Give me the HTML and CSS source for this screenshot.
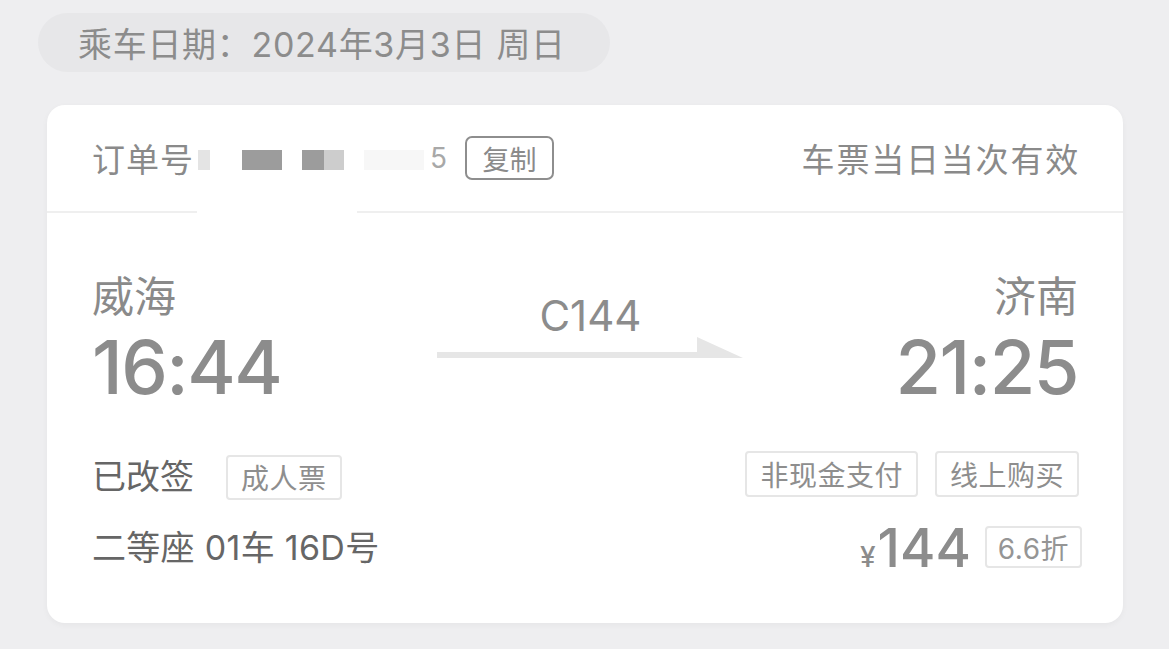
FILE: index.html
```html
<!DOCTYPE html>
<html lang="zh-CN">
<head>
<meta charset="utf-8">
<link rel="stylesheet" href="styles.css">
</head>
<body>
<div class="page">
  <div class="date-pill">乘车日期：2024年3月3日 周日</div>
  <div class="card">
    <div class="card-head">
      <div class="order">
        <span class="order-label">订单号</span>
        <span class="mask">
          <i class="m m1"></i><i class="m m2"></i><i class="m m3"></i><i class="m m4"></i><i class="m m5"></i>
        </span>
        <span class="order-tail">5</span>
        <span class="copy-btn">复制</span>
        <span class="blur-gap"></span>
      </div>
      <div class="valid">车票当日当次有效</div>
    </div>
    <div class="route">
      <div class="station">
        <div class="city">威海</div>
        <div class="time">16:44</div>
      </div>
      <div class="train">
        <div class="train-no">C144</div>
        <svg class="arrow" width="306" height="24" viewBox="0 0 306 24">
          <path d="M0 15 H260 V0 L306 21 H0 Z" fill="#e6e6e6"/>
        </svg>
      </div>
      <div class="station right">
        <div class="city">济南</div>
        <div class="time">21:25</div>
      </div>
    </div>
    <div class="info-row">
      <div class="left-group">
        <span class="status">已改签</span>
        <span class="tag tag-adult">成人票</span>
      </div>
      <div class="right-group">
        <span class="tag">非现金支付</span>
        <span class="tag">线上购买</span>
      </div>
    </div>
    <div class="info-row seat-row">
      <span class="seat">二等座 01车 16D号</span>
      <div class="price-group">
        <span class="price"><span class="yen">¥</span>144</span>
        <span class="tag discount">6.6折</span>
      </div>
    </div>
  </div>
</div>
</body>
</html>
```

FILE: styles.css
```css
* { box-sizing: border-box; }
html, body { margin: 0; padding: 0; }
body {
  background: #eeeef0;
  width: 1169px;
  height: 649px;
  overflow: hidden;
  font-family: "Inter", "Noto Sans CJK SC", sans-serif;
  color: #8a8a8a;
}
.page {
  padding: 13px 0 0 47px;
}
.date-pill {
  display: inline-flex;
  align-items: center;
  height: 59px;
  margin-left: -9px;
  padding: 0 44px 0 40px;
  border-radius: 30px;
  background: #e7e7e9;
  font-size: 34px;
  color: #8c8c8c;
  letter-spacing: 0.7px;
}
.card {
  margin-top: 33px;
  width: 1076px;
  height: 518px;
  background: #fff;
  border-radius: 18px;
  box-shadow: 0 2px 6px rgba(0,0,0,0.04);
}
.card-head {
  height: 108px;
  padding: 0 45px;
  display: flex;
  align-items: center;
  justify-content: space-between;
  border-bottom: 2px solid #efefef;
  position: relative;
}
.order {
  display: flex;
  align-items: center;
  font-size: 33px;
  color: #8a8a8a;
}
.order-label { letter-spacing: 1px; }
.mask {
  display: flex;
  align-items: center;
  width: 236px;
  height: 40px;
  position: relative;
}
.m { display: block; position: absolute; height: 20px; top: 12px; }
.m1 { left: 4px; width: 12px; background: #e4e4e4; }
.m2 { left: 48px; width: 40px; background: #9c9c9c; }
.m3 { left: 108px; width: 22px; background: #9c9c9c; }
.m4 { left: 130px; width: 20px; background: #cdcdcd; }
.m5 { left: 170px; width: 60px; background: #f7f7f7; }
.order-tail {
  display: inline-block;
  color: #a8a8a8;
  font-size: 28px;
  margin-right: 18px;
}
.copy-btn {
  display: inline-flex;
  align-items: center;
  justify-content: center;
  width: 89px;
  height: 44px;
  border: 2px solid #8e8e8e;
  border-radius: 7px;
  font-size: 27px;
  color: #8a8a8a;
}
.blur-gap {
  position: absolute;
  left: 150px;
  bottom: -4px;
  width: 160px;
  height: 6px;
  background: #fff;
}
.valid {
  font-size: 33px;
  color: #8a8a8a;
  letter-spacing: 1.8px;
  margin-right: -2px;
}
.route {
  display: flex;
  justify-content: space-between;
  align-items: flex-start;
  padding: 58px 45px 0 45px;
  height: 230px;
}
.station {
  display: flex;
  flex-direction: column;
}
.station.right { align-items: flex-end; }
.city {
  font-size: 42px;
  line-height: 52px;
  color: #8a8a8a;
}
.time {
  font-size: 74px;
  line-height: 88px;
  font-weight: 500;
  color: #8c8c8c;
  letter-spacing: -1.5px;
}
.train {
  display: flex;
  flex-direction: column;
  align-items: center;
  margin-top: 19px;
  margin-left: 4px;
}
.train-no {
  font-size: 42px;
  line-height: 52px;
  color: #8c8c8c;
}
.arrow { display: block; margin-top: -5px; }
.info-row {
  display: flex;
  justify-content: space-between;
  align-items: center;
  padding: 0 44px 0 45px;
  height: 62px;
}
.left-group, .right-group, .price-group {
  display: flex;
  align-items: center;
}
.status {
  font-size: 34px;
  color: #666;
  margin-right: 32px;
}
.tag {
  display: inline-flex;
  align-items: center;
  justify-content: center;
  height: 46px;
  padding: 0 13px;
  border: 2px solid #e6e6e6;
  border-radius: 4px;
  font-size: 28px;
  color: #8e8e8e;
  letter-spacing: 0.5px;
}
.tag-adult { margin-top: 6px; height: 45px; }
.right-group .tag + .tag { margin-left: 17px; }
.seat-row { height: 88px; padding-bottom: 8px; }
.seat {
  font-size: 34px;
  color: #666;
  letter-spacing: 0.3px;
}
.price-group { margin-top: 4px; }
.price {
  font-size: 54px;
  font-weight: 500;
  color: #8c8c8c;
  display: inline-flex;
  align-items: baseline;
}
.yen {
  font-size: 28px;
  margin-right: 2px;
}
.discount {
  margin-left: 14px;
  margin-right: -3px;
  height: 42px;
  padding: 0 11px;
  font-size: 28px;
  color: #959595;
}
```
